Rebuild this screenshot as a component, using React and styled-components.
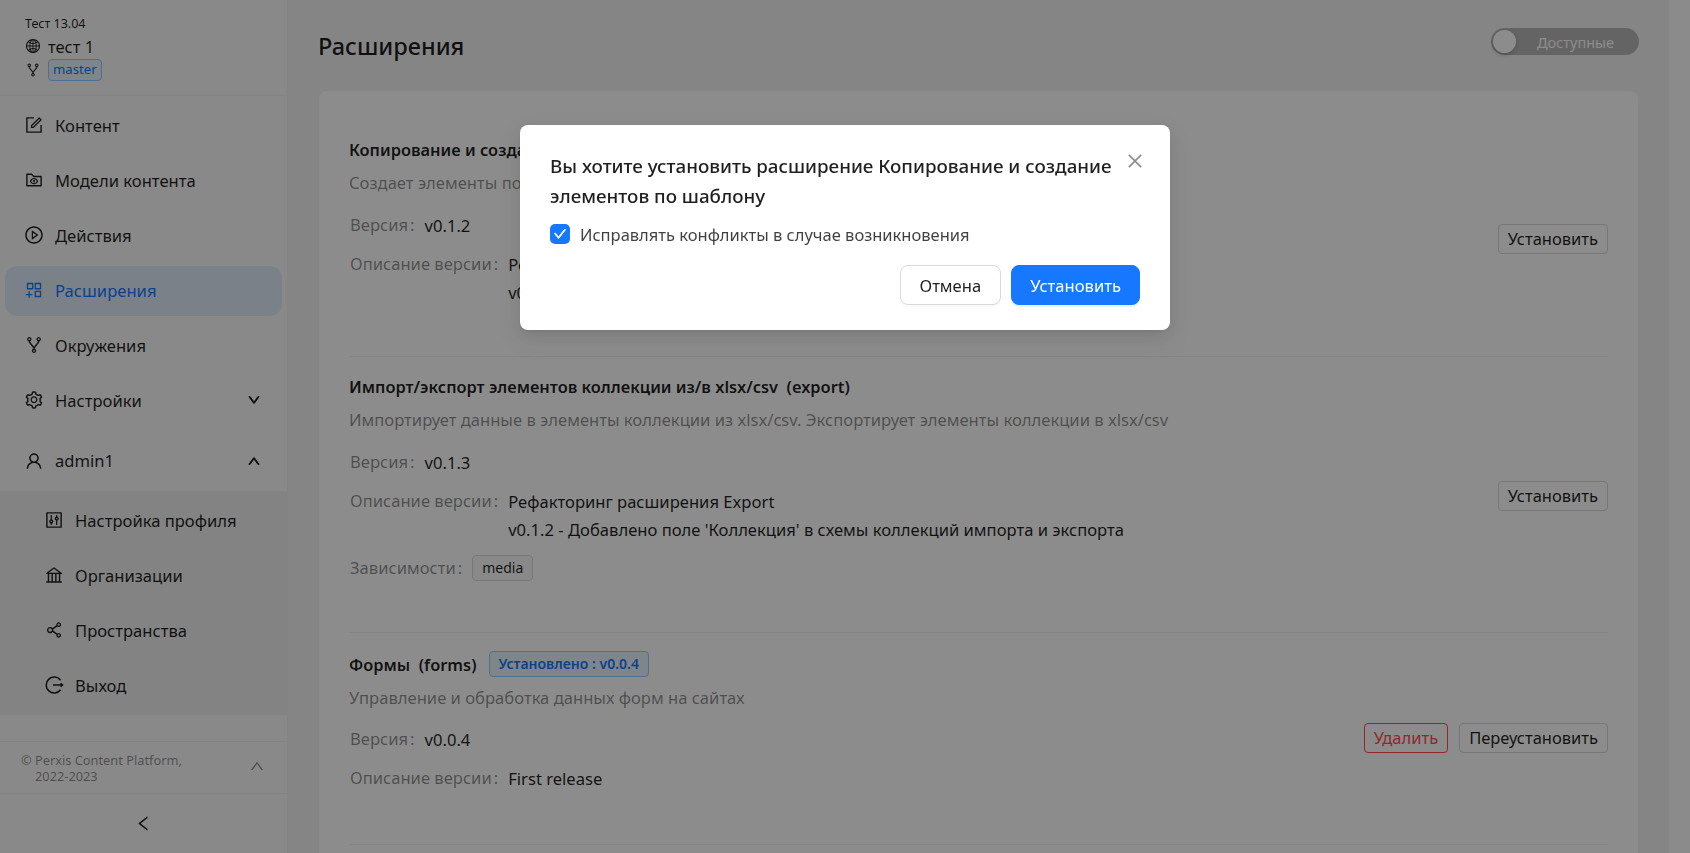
import React from 'react';
import styled, { createGlobalStyle } from 'styled-components';
import {
	AiOutlineGlobal,
	AiOutlineFork,
	AiOutlineForm,
	AiOutlineFolderView,
	AiOutlinePlayCircle,
	AiOutlineAppstoreAdd,
	AiOutlineSetting,
	AiOutlineUser,
	AiOutlineControl,
	AiOutlineBank,
	AiOutlineShareAlt,
	AiOutlineDown,
	AiOutlineUp,
	AiOutlineLeft,
	AiOutlineClose,
	AiOutlineCheck,
} from 'react-icons/ai';

const FONT = `'Noto Sans', 'Open Sans', sans-serif`;

const GlobalStyle = createGlobalStyle`
	html, body {
		margin: 0;
		padding: 0;
		height: 100%;
		overflow: hidden;
	}
	* {
		box-sizing: border-box;
	}
	body {
		font-family: ${FONT};
		font-size: 16.6px;
		color: rgba(0, 0, 0, 0.88);
		background: #f3f3f3;
	}
`;

const Page = styled.div`
	display: flex;
	height: 853px;
	overflow: hidden;
`;

const Sidebar = styled.aside`
	width: 288px;
	flex: none;
	height: 853px;
	display: flex;
	flex-direction: column;
	background: #fafafa;
	border-right: 1px solid #f0f0f0;
`;

const SpaceInfo = styled.div`
	height: 96px;
	flex: none;
	padding: 15px 25px 0;
	border-bottom: 1px solid #eeeeee;
`;

const OrgName = styled.div`
	font-size: 12.5px;
	line-height: 18px;
`;

const SpaceRow = styled.div`
	display: flex;
	align-items: center;
	gap: 7px;
	height: ${(p) => p.$height}px;
	font-size: 16.5px;
	svg {
		font-size: 16px;
		flex: none;
	}
`;

const EnvTag = styled.span`
	display: inline-block;
	height: 22px;
	padding: 0 4px;
	font-size: 13.2px;
	line-height: 18px;
	color: #1677ff;
	background: #e6f4ff;
	border: 1px solid #91caff;
	border-radius: 4px;
`;

const Menu = styled.nav`
	display: flex;
	flex-direction: column;
	padding-top: 5px;
`;

const MenuItem = styled.div`
	height: 50px;
	margin: 0 5px 5px;
	padding: 0 19px 2px;
	display: flex;
	align-items: center;
	gap: 11px;
	border-radius: 12px;
	font-size: 16.6px;
	color: ${(p) => (p.$active ? '#1677ff' : 'rgba(0, 0, 0, 0.88)')};
	background: ${(p) => (p.$active ? '#e0ecf9' : 'transparent')};
	> svg:first-child {
		font-size: 20px;
		flex: none;
	}
`;

const Chevron = styled.span`
	margin-left: auto;
	margin-right: 2px;
	display: flex;
	font-size: 14px;
	svg {
		stroke: currentColor;
		stroke-width: 60;
	}
`;

const UserItem = styled(MenuItem)`
	height: 57px;
	margin: 3px 5px 0;
	padding-bottom: 4px;
`;

const SubMenu = styled.div`
	background: #eeeeee;
	height: 224px;
	padding-top: 5px;
	display: flex;
	flex-direction: column;
	gap: 5px;
`;

const SubItem = styled(MenuItem)`
	padding-left: 39px;
	margin: 0 5px;
`;

const SidebarFooter = styled.div`
	margin-top: auto;
	flex: none;
`;

const Copyright = styled.div`
	height: 53px;
	padding: 10px 22px 0 21px;
	display: flex;
	justify-content: space-between;
	border-top: 1px solid #eeeeee;
	border-bottom: 1px solid #eeeeee;
	font-size: 12.8px;
	line-height: 16px;
	color: rgba(0, 0, 0, 0.45);
	svg {
		font-size: 16px;
		margin-top: 6px;
	}
`;

const CopyLine = styled.div`
	padding-left: ${(p) => (p.$indent ? '14px' : '0')};
`;

const Collapse = styled.div`
	height: 59px;
	display: flex;
	align-items: center;
	justify-content: center;
	font-size: 19px;
`;

const Main = styled.main`
	flex: 1;
	min-width: 0;
	display: flex;
`;

const Content = styled.div`
	width: 1381px;
	flex: none;
	padding: 0 31px;
`;

const ScrollTrack = styled.div`
	flex: 1;
	background: #fdfdfd;
`;

const TitleBar = styled.div`
	height: 91px;
	display: flex;
	align-items: center;
	justify-content: space-between;
`;

const PageTitle = styled.h1`
	margin: 0 0 0 -1px;
	font-size: 23.5px;
	font-weight: 500;
	line-height: 32px;
`;

const Toggle = styled.div`
	width: 148px;
	height: 27px;
	margin: 0 -1px 8px 0;
	padding: 2px;
	display: flex;
	align-items: center;
	border-radius: 14px;
	background: rgba(0, 0, 0, 0.25);
`;

const Knob = styled.span`
	width: 23px;
	height: 23px;
	flex: none;
	border-radius: 50%;
	background: #fff;
	box-shadow: 0 2px 4px rgba(0, 35, 11, 0.2);
`;

const ToggleLabel = styled.span`
	flex: 1;
	text-align: center;
	padding-right: 2px;
	font-size: 14.5px;
	color: #fff;
`;

const Card = styled.section`
	background: #fff;
	border-radius: 8px 8px 0 0;
	padding: 0 30px;
	min-height: 800px;
`;

const Extension = styled.article`
	display: flex;
	justify-content: space-between;
	height: ${(p) => p.$height}px;
	padding-top: ${(p) => p.$top}px;
	border-bottom: 1px solid #f0f0f0;
`;

const ExtensionBody = styled.div`
	min-width: 0;
`;

const ExtensionTitle = styled.div`
	display: flex;
	align-items: center;
	gap: 12px;
	height: 28px;
	font-size: 16.4px;
	font-weight: 600;
	white-space: pre;
`;

const InstalledTag = styled.span`
	height: 26px;
	padding: 0 9px;
	font-size: 14px;
	font-weight: 600;
	line-height: 24px;
	color: #1677ff;
	background: #e6f4ff;
	border: 1px solid #91caff;
	border-radius: 4px;
`;

const Description = styled.div`
	margin-top: 7px;
	line-height: 26px;
	color: rgba(0, 0, 0, 0.45);
`;

const FieldRow = styled.div`
	display: flex;
	margin: ${(p) => p.$gap}px 0 0 1px;
	line-height: 26px;
`;

const FieldLabel = styled.span`
	color: rgba(0, 0, 0, 0.45);
	white-space: nowrap;
`;

const Colon = styled.span`
	margin: 0 10px 0 2px;
`;

const FieldValue = styled.span`
	white-space: pre-line;
	line-height: 28px;
`;

const DepTag = styled.span`
	align-self: center;
	height: 26px;
	padding: 0 9px;
	font-size: 14px;
	line-height: 24px;
	background: #fafafa;
	border: 1px solid #d9d9d9;
	border-radius: 4px;
`;

const Actions = styled.div`
	display: flex;
	gap: 11px;
	flex: none;
	padding-top: ${(p) => p.$top}px;
`;

const SmallButton = styled.button`
	height: 30px;
	padding: 0 9px;
	font-family: ${FONT};
	font-size: 16.5px;
	line-height: 28px;
	color: ${(p) => (p.$danger ? '#ff4d4f' : 'rgba(0, 0, 0, 0.88)')};
	background: #fff;
	border: 1px solid ${(p) => (p.$danger ? '#ff4d4f' : '#d9d9d9')};
	border-radius: 4px;
`;

const Mask = styled.div`
	position: fixed;
	inset: 0;
	background: rgba(0, 0, 0, 0.45);
`;

const Modal = styled.div`
	position: fixed;
	top: 125px;
	left: 520px;
	width: 650px;
	height: 205px;
	padding: 26px 30px 0;
	background: #fff;
	border-radius: 8px;
	box-shadow: 0 6px 16px rgba(0, 0, 0, 0.08), 0 3px 6px -4px rgba(0, 0, 0, 0.12), 0 9px 28px 8px rgba(0, 0, 0, 0.05);
`;

const CloseIcon = styled.span`
	position: absolute;
	top: 26px;
	right: 25px;
	display: flex;
	font-size: 20px;
	color: rgba(0, 0, 0, 0.45);
`;

const ModalTitle = styled.div`
	padding-right: 20px;
	font-size: 18.8px;
	font-weight: 500;
	line-height: 30px;
`;

const CheckRow = styled.label`
	display: flex;
	align-items: center;
	gap: 10px;
	height: 26px;
	margin-top: 10px;
	font-size: 16.5px;
	color: rgba(0, 0, 0, 0.75);
`;

const CheckBox = styled.span`
	width: 20px;
	height: 20px;
	display: flex;
	align-items: center;
	justify-content: center;
	border-radius: 5px;
	background: #1677ff;
	color: #fff;
	font-size: 14px;
	svg {
		stroke: currentColor;
		stroke-width: 60;
	}
`;

const ModalFooter = styled.div`
	display: flex;
	justify-content: flex-end;
	gap: 10px;
	margin-top: 18px;
`;

const ModalButton = styled.button`
	height: 40px;
	padding: 0 ${(p) => (p.$primary ? 18 : 19)}px;
	font-family: ${FONT};
	font-size: 16.6px;
	border-radius: 8px;
	color: ${(p) => (p.$primary ? '#fff' : 'rgba(0, 0, 0, 0.88)')};
	background: ${(p) => (p.$primary ? '#1677ff' : '#fff')};
	border: 1px solid ${(p) => (p.$primary ? '#1677ff' : '#d9d9d9')};
	box-shadow: 0 2px 0 ${(p) => (p.$primary ? 'rgba(5, 145, 255, 0.1)' : 'rgba(0, 0, 0, 0.02)')};
`;

// в наборах нет такой иконки выхода, рисуем сами
const ExitIcon = () => (
	<svg width='20' height='20' viewBox='0 0 20 20' fill='none' stroke='currentColor' strokeWidth='1.5' style={{ flex: 'none' }}>
		<path d='M16.6 5.2A8 8 0 1 0 16.6 14.8' />
		<path d='M9 10h9.5M16.6 8.2l2 1.8-2 1.8' />
	</svg>
);

const Field = ({ label, gap, children }) => (
	<FieldRow $gap={gap}>
		<FieldLabel>
			{label}
			<Colon>:</Colon>
		</FieldLabel>
		{children}
	</FieldRow>
);

const menu = [
	{ icon: <AiOutlineForm />, label: 'Контент' },
	{ icon: <AiOutlineFolderView />, label: 'Модели контента' },
	{ icon: <AiOutlinePlayCircle />, label: 'Действия' },
	{ icon: <AiOutlineAppstoreAdd />, label: 'Расширения', active: true },
	{ icon: <AiOutlineFork />, label: 'Окружения' },
];

const profile = [
	{ icon: <AiOutlineControl />, label: 'Настройка профиля' },
	{ icon: <AiOutlineBank />, label: 'Организации' },
	{ icon: <AiOutlineShareAlt />, label: 'Пространства' },
	{ icon: <ExitIcon />, label: 'Выход' },
];

function App() {
	return (
		<>
			<GlobalStyle />
			<Page>
				<Sidebar>
					<SpaceInfo>
						<OrgName>Тест 13.04</OrgName>
						<SpaceRow $height={26}>
							<AiOutlineGlobal />
							тест 1
						</SpaceRow>
						<SpaceRow $height={22}>
							<AiOutlineFork />
							<EnvTag>master</EnvTag>
						</SpaceRow>
					</SpaceInfo>
					<Menu>
						{menu.map((item) => (
							<MenuItem key={item.label} $active={item.active}>
								{item.icon}
								{item.label}
							</MenuItem>
						))}
						<MenuItem>
							<AiOutlineSetting />
							Настройки
							<Chevron>
								<AiOutlineDown />
							</Chevron>
						</MenuItem>
						<UserItem>
							<AiOutlineUser />
							admin1
							<Chevron>
								<AiOutlineUp />
							</Chevron>
						</UserItem>
						<SubMenu>
							{profile.map((item) => (
								<SubItem key={item.label}>
									{item.icon}
									{item.label}
								</SubItem>
							))}
						</SubMenu>
					</Menu>
					<SidebarFooter>
						<Copyright>
							<div>
								<div>© Perxis Content Platform,</div>
								<CopyLine $indent>2022-2023</CopyLine>
							</div>
							<AiOutlineUp />
						</Copyright>
						<Collapse>
							<AiOutlineLeft />
						</Collapse>
					</SidebarFooter>
				</Sidebar>
				<Main>
					<Content>
						<TitleBar>
							<PageTitle>Расширения</PageTitle>
							<Toggle>
								<Knob />
								<ToggleLabel>Доступные</ToggleLabel>
							</Toggle>
						</TitleBar>
						<Card>
							<Extension $height={266} $top={44}>
								<ExtensionBody>
									<ExtensionTitle>Копирование и создание элементов по шаблону</ExtensionTitle>
									<Description>Создает элементы по шаблону</Description>
									<Field label='Версия' gap={16}>
										<FieldValue>v0.1.2</FieldValue>
									</Field>
									<Field label='Описание версии' gap={11}>
										<FieldValue>{'Рефакторинг\nv0.1.1'}</FieldValue>
									</Field>
								</ExtensionBody>
								<Actions $top={89}>
									<SmallButton>Установить</SmallButton>
								</Actions>
							</Extension>
							<Extension $height={276} $top={15}>
								<ExtensionBody>
									<ExtensionTitle>Импорт/экспорт элементов коллекции из/в xlsx/csv  (export)</ExtensionTitle>
									<Description>Импортирует данные в элементы коллекции из xlsx/csv. Экспортирует элементы коллекции в xlsx/csv</Description>
									<Field label='Версия' gap={16}>
										<FieldValue>v0.1.3</FieldValue>
									</Field>
									<Field label='Описание версии' gap={11}>
										<FieldValue>{"Рефакторинг расширения Export\nv0.1.2 - Добавлено поле 'Коллекция' в схемы коллекций импорта и экспорта"}</FieldValue>
									</Field>
									<Field label='Зависимости' gap={11}>
										<DepTag>media</DepTag>
									</Field>
								</ExtensionBody>
								<Actions $top={109}>
									<SmallButton>Установить</SmallButton>
								</Actions>
							</Extension>
							<Extension $height={212} $top={17}>
								<ExtensionBody>
									<ExtensionTitle>
										Формы  (forms)
										<InstalledTag>Установлено : v0.0.4</InstalledTag>
									</ExtensionTitle>
									<Description>Управление и обработка данных форм на сайтах</Description>
									<Field label='Версия' gap={15}>
										<FieldValue>v0.0.4</FieldValue>
									</Field>
									<Field label='Описание версии' gap={11}>
										<FieldValue>First release</FieldValue>
									</Field>
								</ExtensionBody>
								<Actions $top={73}>
									<SmallButton $danger>Удалить</SmallButton>
									<SmallButton>Переустановить</SmallButton>
								</Actions>
							</Extension>
						</Card>
					</Content>
					<ScrollTrack />
				</Main>
			</Page>
			<Mask />
			<Modal>
				<CloseIcon>
					<AiOutlineClose />
				</CloseIcon>
				<ModalTitle>Вы хотите установить расширение Копирование и создание элементов по шаблону</ModalTitle>
				<CheckRow>
					<CheckBox>
						<AiOutlineCheck />
					</CheckBox>
					Исправлять конфликты в случае возникновения
				</CheckRow>
				<ModalFooter>
					<ModalButton>Отмена</ModalButton>
					<ModalButton $primary>Установить</ModalButton>
				</ModalFooter>
			</Modal>
		</>
	);
}

export default App;
